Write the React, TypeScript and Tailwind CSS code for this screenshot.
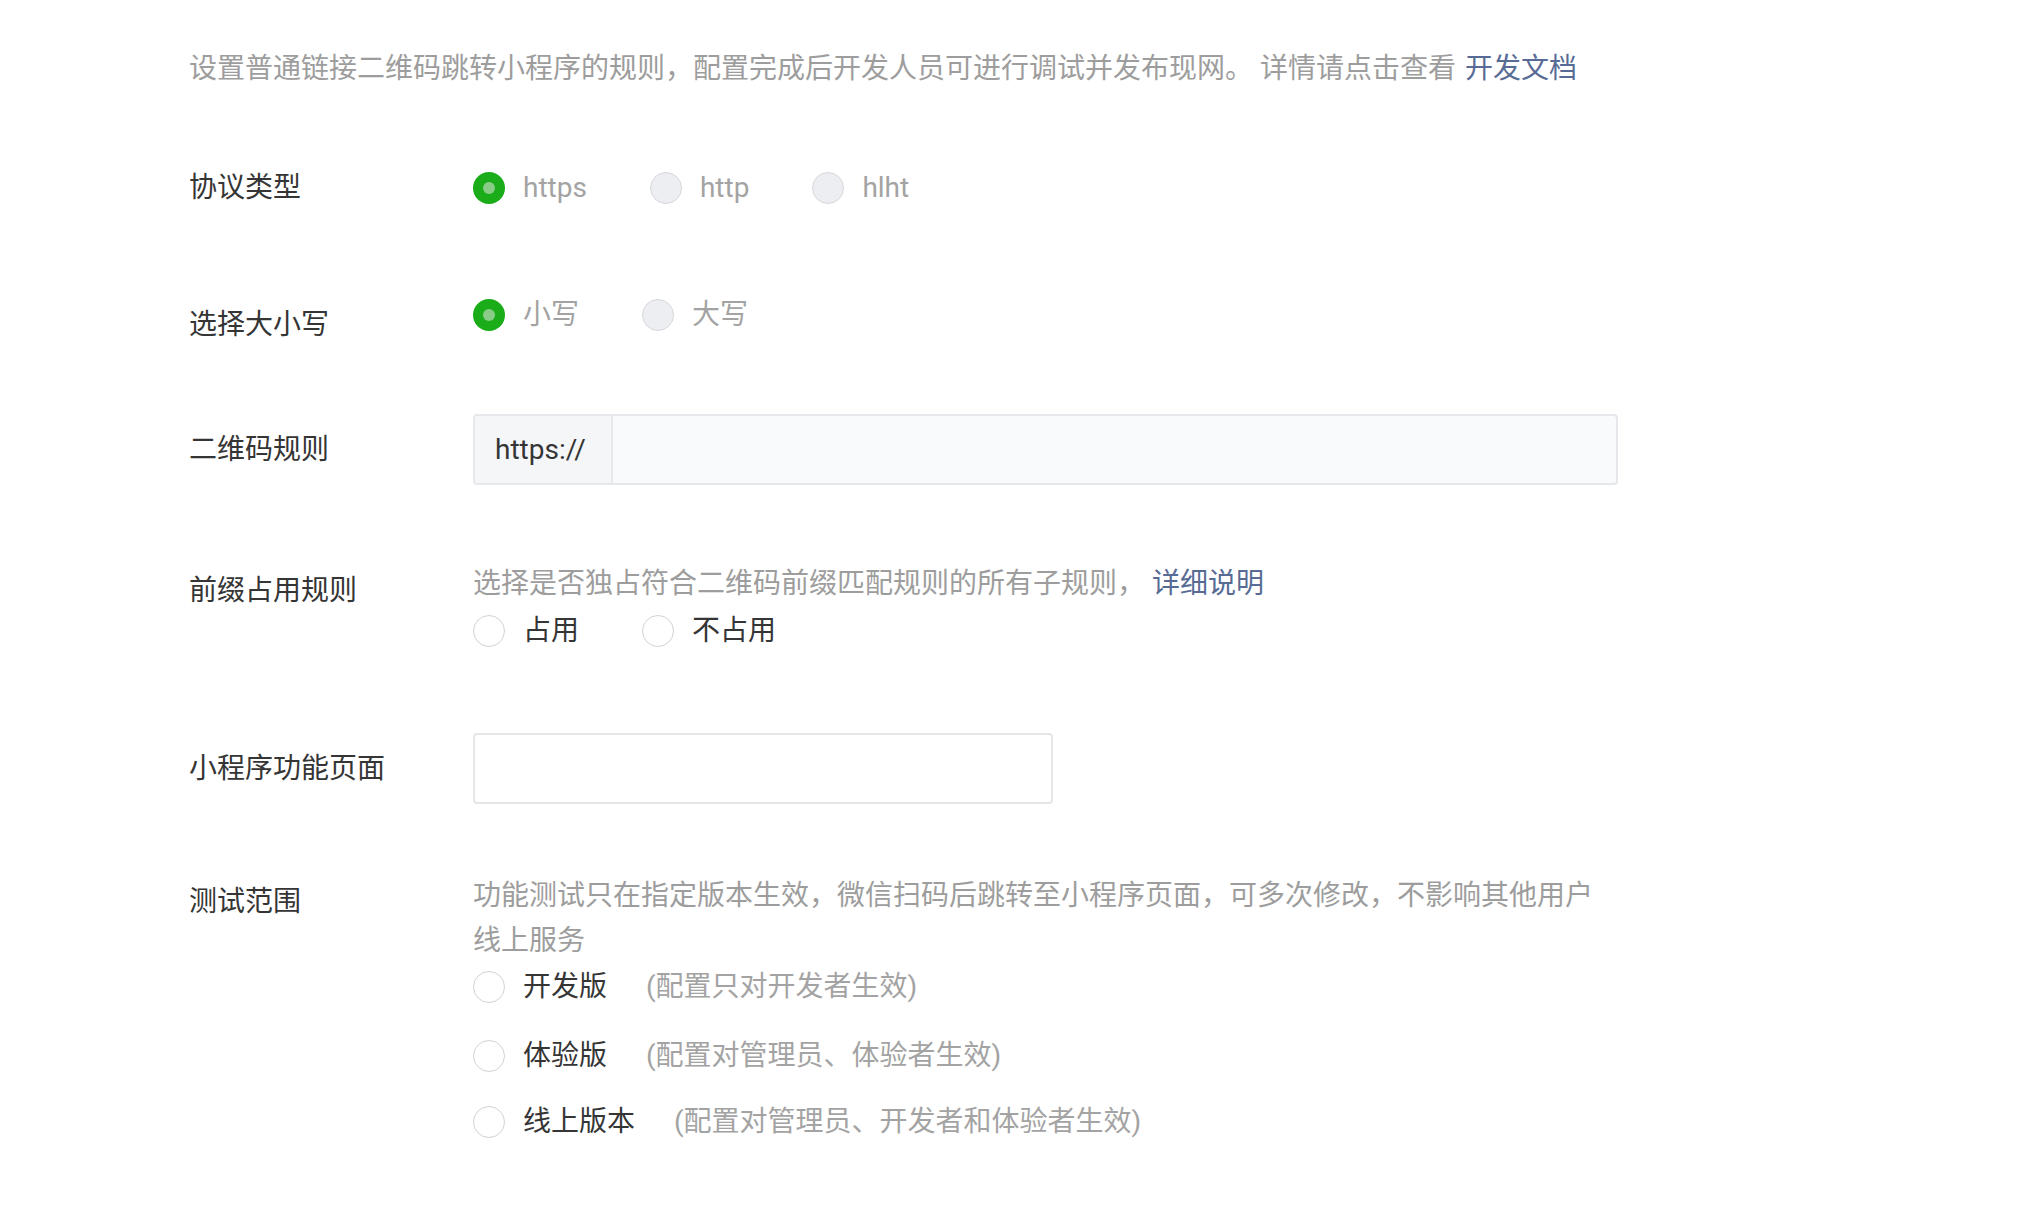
import type { ReactNode } from 'react';

type RadioState = 'checked' | 'disabled' | 'empty';

const Radio = ({ state }: { state: RadioState }) => {
    if (state === 'checked') {
        return (
            <span className="flex h-8 w-8 shrink-0 items-center justify-center rounded-full bg-[#1aad19]">
                <span className="h-3 w-3 rounded-full bg-[#88cc88]" />
            </span>
        );
    }
    if (state === 'disabled') {
        return <span className="h-8 w-8 shrink-0 rounded-full border-[1.5px] border-[#d6d8db] bg-[#eceef1]" />;
    }
    return <span className="h-8 w-8 shrink-0 rounded-full border-[1.5px] border-[#d3d3d3] bg-white" />;
};

interface OptionProps {
    state: RadioState;
    text: string;
    muted?: boolean;
}

const Option = ({ state, text, muted }: OptionProps) => (
    <label className="flex h-10 items-center gap-[18px]">
        <Radio state={state} />
        <span className={muted ? 'text-[#a3a3a3]' : 'text-[#353535]'}>{text}</span>
    </label>
);

interface RowProps {
    label: string;
    className: string;
    labelClass?: string;
    children: ReactNode;
}

const Row = ({ label, className, labelClass = '', children }: RowProps) => (
    <div className={`flex ${className}`}>
        <div className={`w-[284px] shrink-0 leading-[40px] text-[#353535] ${labelClass}`}>{label}</div>
        <div className="min-w-0 flex-1">{children}</div>
    </div>
);

export default function App() {
    return (
        <div className="min-h-screen bg-white pl-[189px] pt-[49px] font-['Roboto','Noto_Sans_CJK_SC',sans-serif] text-[28px]">
            {/* intro */}
            <p className="leading-[40px] text-[#9d9d9d]">
                设置普通链接二维码跳转小程序的规则，配置完成后开发人员可进行调试并发布现网。
                <span className="ml-[7px]">详情请点击查看</span>
                <a className="ml-[9px] text-[#576b95]">开发文档</a>
            </p>

            {/* protocol */}
            <Row label="协议类型" className="mt-[79px]">
                <div className="flex gap-x-[63px]">
                    <Option state="checked" text="https" muted />
                    <Option state="disabled" text="http" muted />
                    <Option state="disabled" text="hlht" muted />
                </div>
            </Row>

            {/* case */}
            <Row label="选择大小写" className="mt-[87px]" labelClass="mt-[10px]">
                <div className="flex gap-x-[63px]">
                    <Option state="checked" text="小写" muted />
                    <Option state="disabled" text="大写" muted />
                </div>
            </Row>

            {/* qr rule */}
            <Row label="二维码规则" className="mt-[69px] items-center">
                <div className="flex h-[71px] w-[1145px] overflow-hidden rounded-[4px] border-2 border-[#e6e8eb] bg-[#f9fafb]">
                    <div className="flex w-[138px] items-center border-r-2 border-[#e8e9eb] bg-[#f5f6f8] pl-[20px] text-[#353535]">
                        https://
                    </div>
                    <div className="flex-1" />
                </div>
            </Row>

            {/* prefix */}
            <Row label="前缀占用规则" className="mt-[79px]" labelClass="mt-[7px]">
                <p className="leading-[40px] text-[#9d9d9d]">
                    选择是否独占符合二维码前缀匹配规则的所有子规则，
                    <a className="ml-[7px] text-[#576b95]">详细说明</a>
                </p>
                <div className="mt-[7px] flex gap-x-[63px]">
                    <Option state="empty" text="占用" />
                    <Option state="empty" text="不占用" />
                </div>
            </Row>

            {/* page */}
            <Row label="小程序功能页面" className="mt-[82px] items-center">
                <div className="h-[71px] w-[580px] rounded-[4px] border-2 border-[#e6e6e6] bg-white" />
            </Row>

            {/* test scope */}
            <Row label="测试范围" className="mt-[69px]" labelClass="mt-[9px]">
                <p className="max-w-[1140px] leading-[45px] text-[#9d9d9d]">
                    功能测试只在指定版本生效，微信扫码后跳转至小程序页面，可多次修改，不影响其他用户线上服务
                </p>
                <div className="mt-[4px] flex h-10 items-center">
                    <Option state="empty" text="开发版" />
                    <span className="ml-[39px] text-[#a3a3a3]">(配置只对开发者生效)</span>
                </div>
                <div className="mt-[29px] flex h-10 items-center">
                    <Option state="empty" text="体验版" />
                    <span className="ml-[39px] text-[#a3a3a3]">(配置对管理员、体验者生效)</span>
                </div>
                <div className="mt-[26px] flex h-10 items-center">
                    <Option state="empty" text="线上版本" />
                    <span className="ml-[39px] text-[#a3a3a3]">(配置对管理员、开发者和体验者生效)</span>
                </div>
            </Row>
        </div>
    );
}
